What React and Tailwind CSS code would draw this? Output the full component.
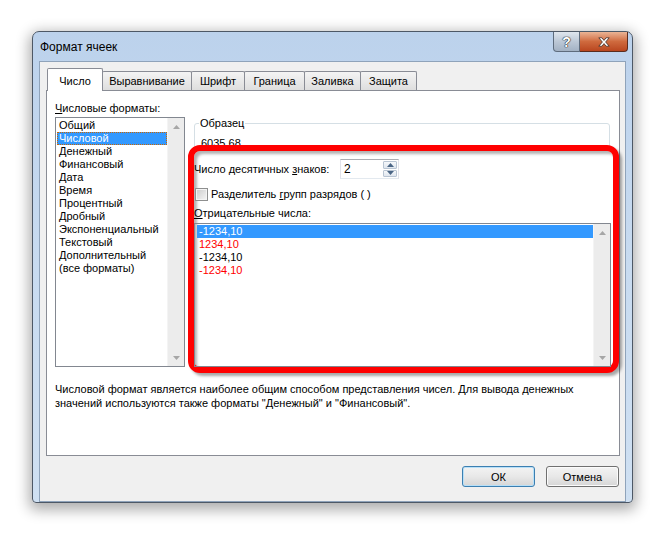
import React from 'react';

const formats = [
  'Общий',
  'Числовой',
  'Денежный',
  'Финансовый',
  'Дата',
  'Время',
  'Процентный',
  'Дробный',
  'Экспоненциальный',
  'Текстовый',
  'Дополнительный',
  '(все форматы)',
];

const negatives = [
  { text: '-1234,10', color: 'text-black' },
  { text: '1234,10', color: 'text-[#ff0000]' },
  { text: '-1234,10', color: 'text-black' },
  { text: '-1234,10', color: 'text-[#ff0000]' },
];

const tabs = [
  { label: 'Число', width: 'w-[56px]', active: true },
  { label: 'Выравнивание', width: 'w-[90px]' },
  { label: 'Шрифт', width: 'w-[54px]' },
  { label: 'Граница', width: 'w-[61px]' },
  { label: 'Заливка', width: 'w-[57px]' },
  { label: 'Защита', width: 'w-[57px]' },
];

// small triangles used by scrollbars and the spinner
const Tri = ({ down, color = '#a6a6a6' }) => (
  <svg width="7" height="4" viewBox="0 0 7 4">
    <path d={down ? 'M0 0 L7 0 L3.5 4 Z' : 'M0 4 L3.5 0 L7 4 Z'} fill={color} />
  </svg>
);

// disabled vertical scrollbar
const ScrollTrack = () => (
  <div className="flex w-[17px] flex-col justify-between border-l border-[#f4f4f4] bg-[#ececec]">
    <div className="flex h-[17px] items-center justify-center">
      <Tri />
    </div>
    <div className="flex h-[17px] items-center justify-center">
      <Tri down />
    </div>
  </div>
);

const Button = ({ children, primary }) => (
  <button
    className={`h-[21px] w-[73px] rounded-[3px] border bg-gradient-to-b from-[#f3f3f3] via-[#e8e8e8] to-[#d6d6d6] text-[11px] text-black ${
      primary ? 'border-[#3c7fb1] shadow-[inset_0_0_0_1px_#b8e0f8]' : 'border-[#707070] shadow-[inset_0_0_0_1px_#fbfbfb]'
    }`}
  >
    {children}
  </button>
);

function App() {
  return (
    <div className="h-[535px] w-[666px] bg-white pl-[32px] pt-[31px] font-['Liberation_Sans',Arial,sans-serif] text-[11px] leading-[14px] text-black">
      {/* window */}
      <div className="flex h-[472px] w-[601px] flex-col rounded-t-[7px] rounded-b-[4px] border border-[#4d5866] bg-gradient-to-b from-[#bcd2ec] via-[#c8dbf0] to-[#cfe0f2] shadow-[0_4px_14px_3px_rgba(0,0,0,0.32)]">
        {/* title bar */}
        <div className="flex h-[29px] justify-between pl-[7px] pr-[4px]">
          <span className="self-center text-[12px]">Формат ячеек</span>
          <div className="flex h-[20px]">
            <div className="flex w-[27px] items-center justify-center rounded-bl-[4px] border border-t-0 border-[#5e6c7d] bg-gradient-to-b from-[#dfe6ee] via-[#bcc8d6] to-[#a3b2c4] text-[14px] font-bold text-white [text-shadow:0_0_1px_#222,0_0_1px_#222,0_0_1px_#222]">
              ?
            </div>
            <div className="flex w-[48px] items-center justify-center rounded-br-[4px] border border-l-0 border-t-0 border-[#5b2c1e] bg-gradient-to-b from-[#eab495] via-[#cf6a3e] to-[#b9461f]">
              <svg width="12" height="10" viewBox="0 0 12 10">
                <path
                  d="M0.8 0.8 H3.9 L6 3.4 L8.1 0.8 H11.2 L7.6 5 L11.2 9.2 H8.1 L6 6.6 L3.9 9.2 H0.8 L4.4 5 Z"
                  fill="#fff"
                  stroke="#3b2a26"
                  strokeWidth="0.8"
                />
              </svg>
            </div>
          </div>
        </div>

        {/* client area */}
        <div className="mx-[6px] flex flex-1 flex-col border border-[#8fa3ba] bg-[#f0f0f0] pb-[10px] pt-[6px]">
          {/* tabs */}
          <div className="ml-[7px] flex h-[22px] items-end">
            {tabs.map((t) =>
              t.active ? (
                <div
                  key={t.label}
                  className={`${t.width} relative z-10 -mb-px flex h-[23px] justify-center rounded-t-[2px] border border-b-0 border-[#898c95] bg-white pt-[5px]`}
                >
                  {t.label}
                </div>
              ) : (
                <div
                  key={t.label}
                  className={`${t.width} -ml-px flex h-[19px] justify-center rounded-t-[2px] border border-b-0 border-[#898c95] bg-gradient-to-b from-[#f4f4f4] to-[#dedede] pt-[2px]`}
                >
                  {t.label}
                </div>
              )
            )}
          </div>

          {/* tab panel */}
          <div className="ml-[6px] mr-[5px] flex h-[366px] flex-col border border-[#898c95] bg-white pt-[10px]">
            <div className="flex">
              {/* left column */}
              <div className="ml-[8px] flex w-[130px] flex-col">
                <div className="mb-[2px]">
                  <u>Ч</u>исловые форматы:
                </div>
                <div className="flex h-[250px] border border-[#828790]">
                  <div className="flex flex-1 flex-col pl-[1px] pt-[1px]">
                    {formats.map((f, i) =>
                      i === 1 ? (
                        <div
                          key={f}
                          className="h-[13px] border border-dotted border-[#cc6600] bg-[#3399ff] pl-[1px] leading-[11px] text-white"
                        >
                          {f}
                        </div>
                      ) : (
                        <div key={f} className="h-[13px] pl-[2px] leading-[13px]">
                          {f}
                        </div>
                      )
                    )}
                  </div>
                  <ScrollTrack />
                </div>
              </div>

              {/* right column */}
              <div className="ml-[3px] flex w-[431px] flex-col">
                <fieldset className="ml-[6px] mt-[15px] h-[44px] w-[416px] rounded-[3px] border border-[#d5dfe5] pl-[4px]">
                  <legend className="px-[1px]">Образец</legend>
                  <div className="pl-[2px] pt-[6px]">6035,68</div>
                </fieldset>

                {/* highlight frame */}
                <div className="relative z-10 -mt-[15px] flex h-[228px] flex-col rounded-[12px] border-[6px] border-[#ff0000] bg-white shadow-[3px_3px_3px_rgba(0,0,0,0.35),inset_3px_3px_3px_rgba(0,0,0,0.3)]">
                  <div className="mt-[8px] flex h-[20px] items-center">
                    <span className="w-[146px]">
                      Число десятичных <u>з</u>наков:
                    </span>
                    <div className="flex h-[20px] w-[59px] border border-[#abadb3] border-l-[#e2e3ea] border-r-[#e2e3ea] border-b-[#e3e9ef] bg-white">
                      <span className="flex-1 pl-[3px] text-[12px] leading-[18px]">2</span>
                      <div className="flex w-[16px] flex-col gap-[1px] p-[1px]">
                        <div className="flex flex-1 items-center justify-center rounded-[1px] border border-[#b8c4d2] bg-gradient-to-b from-[#f6f8fb] to-[#dfe6ee]">
                          <Tri color="#4a6585" />
                        </div>
                        <div className="flex flex-1 items-center justify-center rounded-[1px] border border-[#b8c4d2] bg-gradient-to-b from-[#f6f8fb] to-[#dfe6ee]">
                          <Tri down color="#4a6585" />
                        </div>
                      </div>
                    </div>
                  </div>

                  <div className="mt-[8px] flex h-[14px] items-center">
                    <div className="ml-[1px] h-[13px] w-[13px] border border-[#8e8f8f] bg-gradient-to-br from-[#cbcbcb] to-[#f6f6f6] shadow-[inset_0_0_0_1px_#f4f4f4]" />
                    <span className="ml-[3px]">
                      Разделитель <u>г</u>рупп разрядов ( )
                    </span>
                  </div>

                  <div className="mt-[5px] h-[14px]">
                    <u>О</u>трицательные числа:
                  </div>

                  <div className="mt-[3px] flex h-[144px] w-[417px] border border-[#828790]">
                    <div className="flex flex-1 flex-col pl-[2px] pt-[1px]">
                      {negatives.map((n, i) =>
                        i === 0 ? (
                          <div key={i} className="h-[13px] bg-[#3399ff] pl-[2px] leading-[13px] text-white">
                            {n.text}
                          </div>
                        ) : (
                          <div key={i} className={`h-[13px] pl-[2px] leading-[13px] ${n.color}`}>
                            {n.text}
                          </div>
                        )
                      )}
                    </div>
                    <ScrollTrack />
                  </div>
                </div>
              </div>
            </div>

            <p className="ml-[8px] mt-[9px]">
              Числовой формат является наиболее общим способом представления чисел. Для вывода денежных
              <br />
              значений используются также форматы "Денежный" и "Финансовый".
            </p>
          </div>

          {/* buttons */}
          <div className="mr-[6px] mt-[10px] flex justify-end gap-[11px]">
            <Button primary>ОК</Button>
            <Button>Отмена</Button>
          </div>
        </div>
      </div>
    </div>
  );
}

export default App;
